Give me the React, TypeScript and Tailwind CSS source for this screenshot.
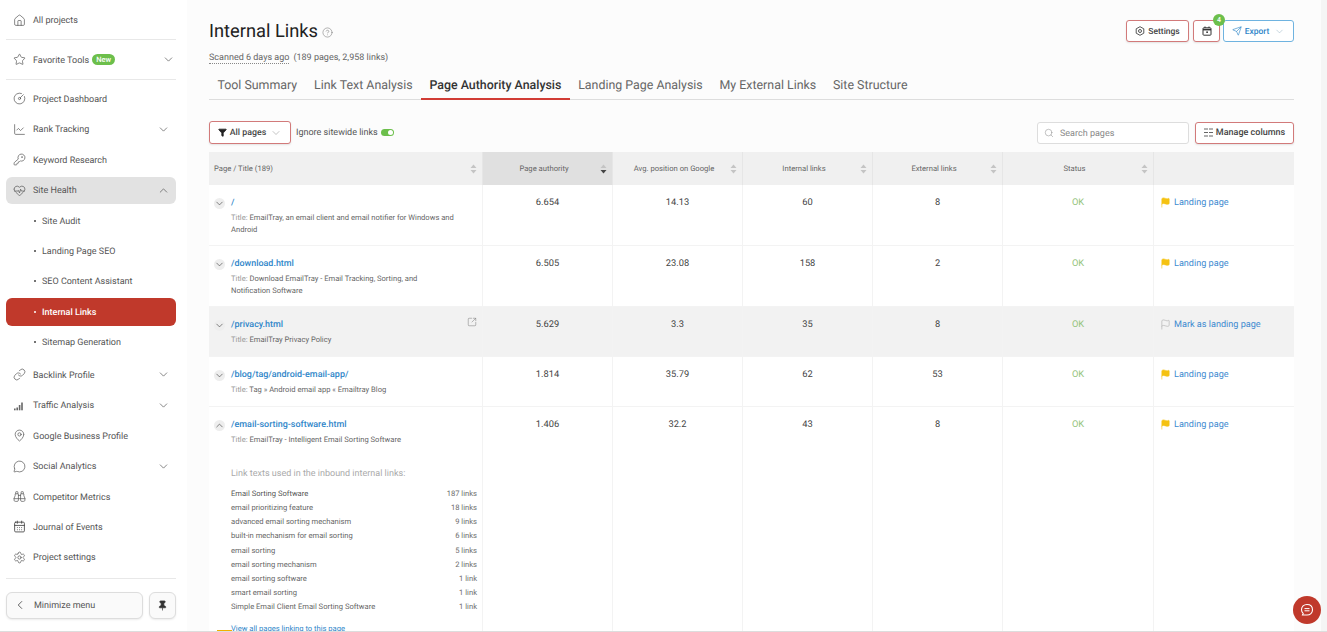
import React from "react";
import {
  House, Star, CircleGauge, ChartLine, KeyRound, HeartPulse, Link, MapPin, MessageCircle, Binoculars,
  CalendarDays, Settings, ChevronDown, ChevronUp, ChevronLeft, Pin, CircleHelp, Funnel, Search,
  Send, SquareArrowOutUpRight, Flag,
} from "lucide-react";

const Bars = () => (
  <svg width="11" height="13" viewBox="0 0 11 13" fill="#666">
    <rect x="1" y="9.5" width="1.6" height="1.8" />
    <rect x="3.4" y="8.5" width="1.6" height="2.8" />
    <rect x="5.8" y="6" width="1.6" height="5.3" />
    <rect x="8.2" y="3.5" width="1.6" height="7.8" />
  </svg>
);

const Sort = ({ active = false }: { active?: boolean }) => (
  <svg width="7" height="10" viewBox="0 0 7 10" className="shrink-0">
    <path d="M3.5 0.5L6.5 4H0.5Z" fill="#c4c4c4" />
    <path d="M3.5 9.5L6.5 6H0.5Z" fill={active ? "#444" : "#c4c4c4"} />
  </svg>
);

function NavInner({ icon, label, caret, badge }: { icon: React.ReactNode; label: string; caret?: "down" | "up"; badge?: boolean }) {
  return (
    <>
      <span className="flex w-[20px] shrink-0 items-center">{icon}</span>
      <span className="pt-[3.5px]">{label}</span>
      {badge && <span className="ml-[3px] rounded-full bg-[#6cbf4b] px-[4px] py-[1px] text-[7.5px] leading-[9px] font-medium text-white">New</span>}
      {caret === "down" && <ChevronDown size={13} strokeWidth={1.3} className="ml-auto text-[#555]" />}
      {caret === "up" && <ChevronUp size={13} strokeWidth={1.3} className="ml-auto text-[#555]" />}
    </>
  );
}

function NavRow(p: { icon: React.ReactNode; label: string; caret?: "down" | "up"; badge?: boolean }) {
  return (
    <div className="flex h-[30.4px] items-center pr-[6px] pl-[7px] text-[9px] text-[#555]">
      <NavInner {...p} />
    </div>
  );
}

function SubRow({ label, active }: { label: string; active?: boolean }) {
  return (
    <div className="flex h-[30.4px] items-center">
      <div className={active ? "flex h-[28px] w-full items-center rounded-md bg-[#c0392b] pl-[28px] text-[9px] font-medium text-white" : "flex h-full w-full items-center pl-[28px] text-[9px] text-[#555]"}>
        <span className={active ? "mr-[3px] h-[2px] w-[2px] rounded-full bg-white" : "mr-[3px] h-[2px] w-[2px] rounded-full bg-[#444]"} />
        <span className="ml-[3px] pt-[3.5px]">{label}</span>
      </div>
    </div>
  );
}

const ic = { size: 13, strokeWidth: 1.3, color: "#555" };

function Sidebar() {
  return (
    <aside className="flex h-full w-[187px] shrink-0 flex-col bg-white px-[6px] shadow-[1px_0_4px_rgba(0,0,0,0.1)]">
      <div className="mt-[5px]"><NavRow icon={<House {...ic} />} label="All projects" /></div>
      <div className="mt-[4px] h-px w-[170px] bg-[#e8e8e8]" />
      <div className="mt-[4px]"><NavRow icon={<Star {...ic} />} label="Favorite Tools" caret="down" badge /></div>
      <div className="mt-[4px] h-px w-[170px] bg-[#e8e8e8]" />
      <div className="mt-[4px] w-[170px]">
        <NavRow icon={<CircleGauge {...ic} />} label="Project Dashboard" />
        <NavRow icon={<ChartLine {...ic} />} label="Rank Tracking" caret="down" />
        <NavRow icon={<KeyRound {...ic} />} label="Keyword Research" />
        <div className="flex h-[30.4px] items-center">
          <div className="flex h-[27px] w-full items-center rounded-md bg-[#e2e2e2] pr-[6px] pl-[7px] text-[9px] text-[#555]">
            <NavInner icon={<HeartPulse {...ic} />} label="Site Health" caret="up" />
          </div>
        </div>
        <SubRow label="Site Audit" />
        <SubRow label="Landing Page SEO" />
        <SubRow label="SEO Content Assistant" />
        <SubRow label="Internal Links" active />
        <SubRow label="Sitemap Generation" />
        <div className="h-[2.5px]" />
        <NavRow icon={<Link {...ic} />} label="Backlink Profile" caret="down" />
        <NavRow icon={<Bars />} label="Traffic Analysis" caret="down" />
        <NavRow icon={<MapPin {...ic} />} label="Google Business Profile" />
        <NavRow icon={<MessageCircle {...ic} />} label="Social Analytics" caret="down" />
        <NavRow icon={<Binoculars {...ic} />} label="Competitor Metrics" />
        <NavRow icon={<CalendarDays size={13} strokeWidth={1.6} color="#444" />} label="Journal of Events" />
        <NavRow icon={<Settings {...ic} />} label="Project settings" />
      </div>
      <div className="mt-[5px] h-px w-[170px] bg-[#e8e8e8]" />
      <div className="mt-[13px] flex w-[170px] gap-[6px]">
        <div className="flex h-[27px] w-[137px] items-center rounded-md border border-[#ddd] bg-[#fafafa] pl-[6px] text-[9px] text-[#555] shadow-[0_1px_2px_rgba(0,0,0,0.08)]">
          <ChevronLeft size={14} strokeWidth={1.4} className="mr-[7px] text-[#444]" />
          <span className="pt-[3.5px]">Minimize menu</span>
        </div>
        <div className="flex h-[27px] w-[27px] items-center justify-center rounded-md border border-[#ddd] bg-[#fafafa] shadow-[0_1px_2px_rgba(0,0,0,0.08)]">
          <Pin size={11} fill="#333" color="#333" strokeWidth={1.5} />
        </div>
      </div>
    </aside>
  );
}

const redBtn = "flex items-center justify-center rounded-[3px] border border-[#d27a7a] bg-white text-[#444] shadow-[0_1px_2px_rgba(0,0,0,0.1)]";

const cols = "grid grid-cols-[274px_130px_130px_130px_130px_151px_140px]";

function HeadCell({ label, active, left }: { label?: string; active?: boolean; left?: boolean }) {
  return (
    <div className={`flex items-center border-r border-[#e6e6e6] pr-[5px] pl-[5px] text-[7.65px] text-[#666] ${active ? "bg-[#e0e0e0]" : ""}`}>
      <span className={left ? "flex-1" : "flex-1 text-center"}>{label}</span>
      {label && <Sort active={active} />}
    </div>
  );
}

function Cell({ children }: { children: React.ReactNode }) {
  return <div className="border-r border-[#f3f3f3] pt-[12px] text-center text-[9.3px] leading-[12px] text-[#444]">{children}</div>;
}

type RowT = { path: string; title: string[]; vals: string[]; h: string; landing: boolean; hover?: boolean; open?: boolean };

const rows: RowT[] = [
  { path: "/", title: ["EmailTray, an email client and email notifier for Windows and", "Android"], vals: ["6.654", "14.13", "60", "8"], h: "h-[61px]", landing: true },
  { path: "/download.html", title: ["Download EmailTray - Email Tracking, Sorting, and", "Notification Software"], vals: ["6.505", "23.08", "158", "2"], h: "h-[61px]", landing: true },
  { path: "/privacy.html", title: ["EmailTray Privacy Policy"], vals: ["5.629", "3.3", "35", "8"], h: "h-[50px]", landing: false, hover: true },
  { path: "/blog/tag/android-email-app/", title: ["Tag » Android email app « Emailtray Blog"], vals: ["1.814", "35.79", "62", "53"], h: "h-[50px]", landing: true },
  { path: "/email-sorting-software.html", title: ["EmailTray - Intelligent Email Sorting Software"], vals: ["1.406", "32.2", "43", "8"], h: "h-[300px]", landing: true, open: true },
];

const linkTexts: [string, string][] = [
  ["Email Sorting Software", "187 links"],
  ["email prioritizing feature", "18 links"],
  ["advanced email sorting mechanism", "9 links"],
  ["built-in mechanism for email sorting", "6 links"],
  ["email sorting", "5 links"],
  ["email sorting mechanism", "2 links"],
  ["email sorting software", "1 link"],
  ["smart email sorting", "1 link"],
  ["Simple Email Client Email Sorting Software", "1 link"],
];

function Row({ r }: { r: RowT }) {
  return (
    <div className={`${cols} ${r.h} border-b border-[#f3f3f3] ${r.hover ? "bg-[#f2f2f2]" : "bg-white"}`}>
      <div className="relative border-r border-[#f3f3f3] pt-[12px] pr-[5px] pl-[5px]">
        <div className="flex items-center">
          <span className="flex h-[11px] w-[11px] items-center justify-center rounded-full bg-[#eeeeee]">
            {r.open ? <ChevronUp size={11} strokeWidth={1.4} color="#444" /> : <ChevronDown size={11} strokeWidth={1.4} color="#444" />}
          </span>
          <span className="ml-[6px] text-[8.95px] leading-[12px] font-medium text-[#2f86c9]">{r.path}</span>
          {r.hover && <SquareArrowOutUpRight size={10} strokeWidth={1.2} color="#777" className="absolute top-[10px] right-[5px]" />}
        </div>
        <div className="mt-[2.5px] pl-[17px] text-[7.6px] leading-[12.5px] text-[#666]">
          <div><span className="text-[#999]">Title: </span>{r.title[0]}</div>
          {r.title[1] && <div>{r.title[1]}</div>}
        </div>
        {r.open && (
          <div className="mt-[21.5px] pl-[17px]">
            <div className="text-[9px] leading-[12px] text-[#aaa]">Link texts used in the inbound internal links:</div>
            <div className="mt-[7px]">
              {linkTexts.map(([t, n], i) => (
                <div key={t} className={`flex h-[14.2px] items-center justify-between text-[7.6px] ${i === 0 ? "text-[#555]" : "text-[#666]"}`}>
                  <span>{t}</span>
                  <span className="text-[#6e6e6e]">{n}</span>
                </div>
              ))}
            </div>
            <div className="mt-[9px] text-[7.6px] leading-[12px] text-[#2f86c9]">View all pages linking to this page</div>
          </div>
        )}
      </div>
      {r.vals.map((v, i) => <Cell key={i}>{v}</Cell>)}
      <div className="border-r border-[#f3f3f3] pt-[12px] text-center text-[9.3px] leading-[12px] text-[#94c37a]">OK</div>
      <div className="flex items-start pt-[12px] pl-[6px] text-[9.1px] leading-[12px] text-[#3f8bd0]">
        <Flag size={11} strokeWidth={1.3} className="mr-[3px]" color={r.landing ? "#f5c211" : "#aaa"} fill={r.landing ? "#f5c211" : "none"} />
        {r.landing ? "Landing page" : "Mark as landing page"}
      </div>
    </div>
  );
}

function Main() {
  return (
    <main className="relative h-full min-w-0 flex-1 overflow-hidden bg-[#fcfcfc] pr-[33px] pl-[22px]">
      <div className="absolute top-0 right-0 bottom-0 w-[6px] bg-[#f5f5f5]" />
      <div className="flex h-[47px] items-end justify-between">
        <div className="flex items-center pb-[3px]">
          <h1 className="text-[18.3px] leading-[24px] font-normal text-[#222]">Internal Links</h1>
          <CircleHelp size={11} strokeWidth={1.2} color="#777" className="ml-[4px]" />
        </div>
        <div className="flex items-center gap-[3px] pb-[5px]">
          <div className={`${redBtn} mr-[1px] h-[22px] w-[63px] gap-[3px] text-[8.5px] font-medium`}>
            <svg width="10" height="10" viewBox="0 0 10 10" fill="none" stroke="#444" strokeWidth="0.9">
              <path d="M5 0.7L8.8 2.8V7.2L5 9.3L1.2 7.2V2.8Z" />
              <circle cx="5" cy="5" r="1.5" />
            </svg>
            <span className="pt-[2px]">Settings</span>
          </div>
          <div className={`${redBtn} relative h-[22px] w-[27px]`}>
            <svg width="10" height="10" viewBox="0 0 10 10" fill="none" stroke="#333" strokeWidth="1">
              <rect x="1" y="1.8" width="8" height="7.4" rx="0.8" />
              <path d="M1 3.6H9" strokeWidth="1.6" />
              <path d="M3 0.5V2M7 0.5V2" />
              <rect x="4.3" y="5.4" width="1.6" height="1.6" fill="#333" stroke="none" />
            </svg>
            <span className="absolute -top-[7px] -right-[6px] flex h-[12px] w-[12px] items-center justify-center rounded-full bg-[#6cbf4b] text-[7px] font-medium text-white">4</span>
          </div>
          <div className="flex h-[22px] w-[71px] items-center justify-center gap-[3px] rounded-[3px] border border-[#6fb3e0] bg-white text-[8.5px] font-medium text-[#2f86c9]">
            <Send size={10} strokeWidth={1.5} /><span className="pt-[2px]">Export</span>
            <ChevronDown size={11} strokeWidth={1} color="#8ab" className="ml-[2px]" />
          </div>
        </div>
      </div>
      <div className="mt-[5px] text-[9px] leading-[12px] text-[#666]">
        <span className="border-b border-dotted border-[#888]">Scanned 6 days ago</span>
        <span className="ml-[4px]">(189 pages, 2,958 links)</span>
      </div>
      <nav className="mt-[7px] flex h-[29px] border-b border-[#ddd] text-[12.4px] text-[#666]">
        <span className="flex h-[28px] items-center px-[8.4px] pt-[2px]">Tool Summary</span>
        <span className="flex h-[28px] items-center px-[8.4px] pt-[2px]">Link Text Analysis</span>
        <span className="flex h-[29px] items-center border-b-2 border-[#d13c35] px-[8.4px] pt-[3px] font-medium text-[#333]">Page Authority Analysis</span>
        <span className="flex h-[28px] items-center px-[8.4px] pt-[2px]">Landing Page Analysis</span>
        <span className="flex h-[28px] items-center px-[8.4px] pt-[2px]">My External Links</span>
        <span className="flex h-[28px] items-center px-[8.4px] pt-[2px]">Site Structure</span>
      </nav>
      <div className="mt-[21px] flex h-[23px] items-center">
        <div className={`${redBtn} h-[23px] w-[82px] gap-[3px] text-[8.8px] font-medium`}>
          <Funnel size={9} fill="#222" color="#222" /><span className="pt-[2px]">All pages</span>
          <ChevronDown size={12} strokeWidth={1} color="#888" className="ml-[1px]" />
        </div>
        <span className="ml-[5px] pt-[2px] text-[9px] text-[#555]">Ignore sitewide links</span>
        <span className="ml-[3px] flex h-[7px] w-[13px] items-center justify-end rounded-full bg-[#6cbf4b] pr-[1px]">
          <span className="h-[5px] w-[5px] rounded-full bg-white" />
        </span>
        <div className="ml-auto flex h-[22px] w-[152px] items-center rounded-[3px] border border-[#ddd] bg-white pl-[6px] text-[9px] text-[#888]">
          <Search size={10} strokeWidth={1.2} color="#888" className="mr-[6px]" /><span className="pt-[3.5px]">Search pages</span>
        </div>
        <div className={`${redBtn} ml-[6px] h-[22px] w-[99px] gap-[3px] text-[9px] font-medium`}>
          <svg width="9" height="9" viewBox="0 0 9 9" stroke="#555" strokeWidth="0.9">
            <path d="M0 1H4M0 4.5H4M0 8H4M5 1H9M5 4.5H9M5 8H9" />
          </svg>
          <span className="pt-[2px]">Manage columns</span>
        </div>
      </div>
      <div className="mt-[8px]">
        <div className={`${cols} h-[33px] bg-[#f0f0f0]`}>
          <HeadCell label="Page / Title (189)" left />
          <HeadCell label="Page authority" active />
          <HeadCell label="Avg. position on Google" />
          <HeadCell label="Internal links" />
          <HeadCell label="External links" />
          <HeadCell label="Status" />
          <div />
        </div>
        {rows.map((r) => <Row key={r.path} r={r} />)}
      </div>
      <span className="absolute bottom-0 left-[30px] h-[1.5px] w-[15px] bg-[#f0b000]" />
      <button className="absolute right-[6px] bottom-[7px] flex h-[28px] w-[28px] items-center justify-center rounded-full bg-[#c0392b]">
        <svg width="14" height="14" viewBox="0 0 14 14" fill="none" stroke="#fff" strokeWidth="1.1">
          <path d="M7 1.5C10.2 1.5 12.5 3.6 12.5 6.8C12.5 10 10.2 12 7 12H2.5L3.2 10.3C2 9.3 1.5 8.2 1.5 6.8C1.5 3.6 3.8 1.5 7 1.5Z" />
          <path d="M4.5 5.6H9.5M4.5 7.8H9.5" strokeWidth="1" />
        </svg>
      </button>
    </main>
  );
}

export default function App() {
  return (
    <div className="flex h-[632px] w-[1327px] overflow-hidden border-b border-[#ddd] bg-[#fcfcfc] font-['Roboto',sans-serif] opacity-[0.999] [text-rendering:geometricPrecision]">
      <Sidebar />
      <Main />
    </div>
  );
}
